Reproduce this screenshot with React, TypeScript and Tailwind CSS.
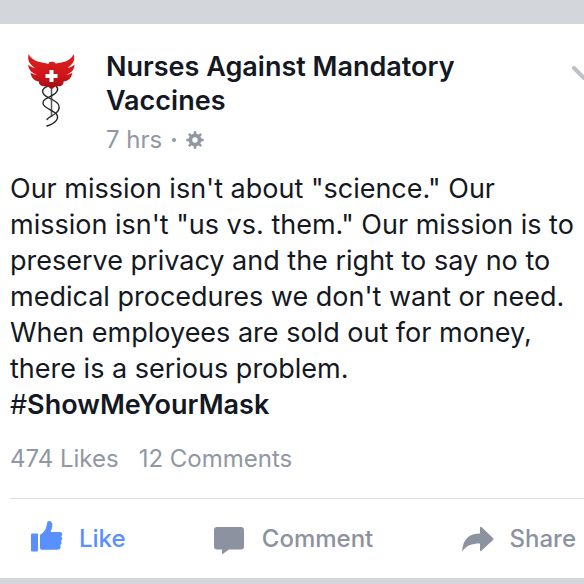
import React from "react";

function Logo() {
  return (
    <svg viewBox="0 0 90 90" className="h-[90px] w-[90px] shrink-0" role="img" aria-label="Nurses Against Mandatory Vaccines">
      <defs>
        <linearGradient id="wing" x1="0" y1="0" x2="0" y2="1">
          <stop offset="0" stopColor="#dd2020" />
          <stop offset="0.6" stopColor="#cf1519" />
          <stop offset="1" stopColor="#a00c12" />
        </linearGradient>
      </defs>
      <path d="M41.500 45V77" stroke="#555" strokeWidth="1.500" />
      <g fill="none" strokeLinecap="round">
        <path d="M38 46C33 48 31 51 34 54.500C37 58 46 60 48.500 64.500C51 70 47 73 42.500 75.500C40 77 38 78 37 79.500" stroke="#333" strokeWidth="1.400" />
        <path d="M46 46C49.500 49 47 53 42 55.500C36 58.500 32.500 60 33 63.500C33.500 68 42 69.500 46 73.500C50 78 46 83 37 86" stroke="#222" strokeWidth="1.400" />
      </g>
      <path
        fill="url(#wing)"
        d="M18.700 14C21 19 26 21.500 32 22.500C35 23 37.500 23.500 38.500 24C38.500 22.500 39.500 21.800 41.500 21.800C43.500 21.800 45.200 22.300 46 24L44.800 24.200C47 23 49 23 51.500 22.500C57 21.500 61.500 19 63.700 14C65.500 20 63 24.500 57.500 27.700C60.500 27.500 62.700 26.500 64.500 24.500C64.500 30 61 33.500 56 34.600C58.500 34.700 60.500 34 62.500 32.500C61.500 38 58 41 53.500 41.500C54 45 50.500 47 47 46C44.500 46 44 48.500 41.500 49C39 48.500 38.500 46 36.500 46C32.500 47 28.500 45 29 41.500C25 41 21 38 20.500 32.500C22.500 34 24.500 34.700 27 34.600C22 33.500 18.500 30 18.200 24.500C20 26.500 22 27.500 25 27.700C19.500 24.500 17 20 18.700 14Z"
      />
      <path d="M39.500 30h4v4h4v4h-4v4h-4V38h-4v-4h4z" fill="#fff" />
    </svg>
  );
}

function Gear() {
  return (
    <svg viewBox="0 0 18 18" className="h-[18px] w-[18px]" aria-hidden="true">
      <g stroke="#9197a3" strokeWidth="2.600">
        <path d="M9 0.300V17.700M0.300 9H17.700M2.900 2.900L15.100 15.100M15.100 2.900L2.900 15.100" />
      </g>
      <circle cx="9" cy="9" r="6.500" fill="#9197a3" />
      <circle cx="9" cy="9" r="2.700" fill="#fff" />
    </svg>
  );
}

function ThumbIcon() {
  return (
    <svg viewBox="0 0 32 36" className="h-9 w-8" fill="currentColor" aria-hidden="true">
      <rect x="0" y="12.500" width="7" height="18" rx="1" />
      <path d="M9 15C9 13.500 10 13 11.500 12C14 10 15.500 7 16 2.500C16.200 0.800 17 0 18.200 0C20.500 0 21.500 2 21.300 4.500C21.100 7 20.500 9 19.500 11H29C30.500 11 31.200 12 31.200 13.200C31.200 14.300 30.700 15 30 15.400C31 16 31.400 17 31.100 18.200C30.900 19.100 30.500 19.600 29.800 20C30.500 20.600 30.800 21.500 30.500 22.500C30.300 23.300 29.800 23.900 29.200 24.200C29.700 24.800 29.800 25.500 29.600 26.300C29.200 28.200 28 28.700 26 28.700H11.500C10 28.700 9 28.200 9 26.700Z" />
    </svg>
  );
}

function CommentIcon() {
  return (
    <svg viewBox="0 0 32 32" className="h-8 w-8" fill="currentColor" aria-hidden="true">
      <path d="M3 4H27Q30 4 30 7V23.500Q30 26.500 27 26.500H15L8 31.500V26.500H3Q0 26.500 0 23.500V7Q0 4 3 4Z" />
    </svg>
  );
}

function ShareIcon() {
  return (
    <svg viewBox="0 0 32 32" className="h-8 w-8" fill="currentColor" aria-hidden="true">
      <path d="M18 5V10.500C7.500 10.500 1 15.500 0 28.500C4.500 22.500 9.500 20.500 18 20.500V27Q18 29 19.700 27.500L31 17Q32 16 31 15L19.700 4.300Q18 3 18 5Z" />
    </svg>
  );
}

const action = "flex items-center gap-4 text-2xl font-medium";

export default function App() {
  return (
    <main className="min-h-screen bg-[#d3d6db] pt-6 pb-[6px] font-['Inter',sans-serif] text-[#141823]">
      <article className="overflow-hidden bg-white">
        <header className="flex items-start pt-4 pl-[10px]">
          <Logo />
          <div className="min-w-0 flex-1 pt-[10px] pl-[6px]">
            <h1 className="max-w-[420px] text-[27px] leading-[34px] font-semibold">Nurses Against Mandatory Vaccines</h1>
            <p className="flex items-center gap-[10px] pt-[6px] text-2xl leading-8 text-[#9197a3]">
              <span>7 hrs</span>
              <span className="h-1 w-1 rounded-full bg-[#9197a3]" />
              <Gear />
            </p>
          </div>
          <button type="button" aria-label="Post options" className="mt-6 flex w-[13px] overflow-hidden">
            <svg viewBox="0 0 26 18" className="h-[18px] w-[26px] shrink-0" fill="none" stroke="#bcc0c7" strokeWidth="4" strokeLinecap="round" strokeLinejoin="round" aria-hidden="true">
              <path d="M3 4L13 14L23 4" />
            </svg>
          </button>
        </header>

        <p className="pt-[15px] pl-[10px] text-[27px] leading-9">
          Our mission isn't about "science." Our<br />
          mission isn't "us vs. them." Our mission is to<br />
          preserve privacy and the right to say no to<br />
          medical procedures we don't want or need.<br />
          When employees are sold out for money,<br />
          there is a serious problem.<br />
          <a href="#ShowMeYourMask">#<span className="font-semibold">ShowMeYourMask</span></a>
        </p>

        <div className="ml-[10px] flex gap-5 border-b border-[#dcdee3] pt-5 pb-[23px] text-2xl leading-8 text-[#9197a3]">
          <span>474 Likes</span>
          <span>12 Comments</span>
        </div>

        <footer className="flex h-[79px] items-center justify-between pr-2 pl-[31px] text-[#8c929f]">
          <button type="button" className={`${action} text-[#5890ff]`}>
            <ThumbIcon />
            Like
          </button>
          <button type="button" className={action}>
            <CommentIcon />
            Comment
          </button>
          <button type="button" className={action}>
            <ShareIcon />
            Share
          </button>
        </footer>
      </article>
    </main>
  );
}
